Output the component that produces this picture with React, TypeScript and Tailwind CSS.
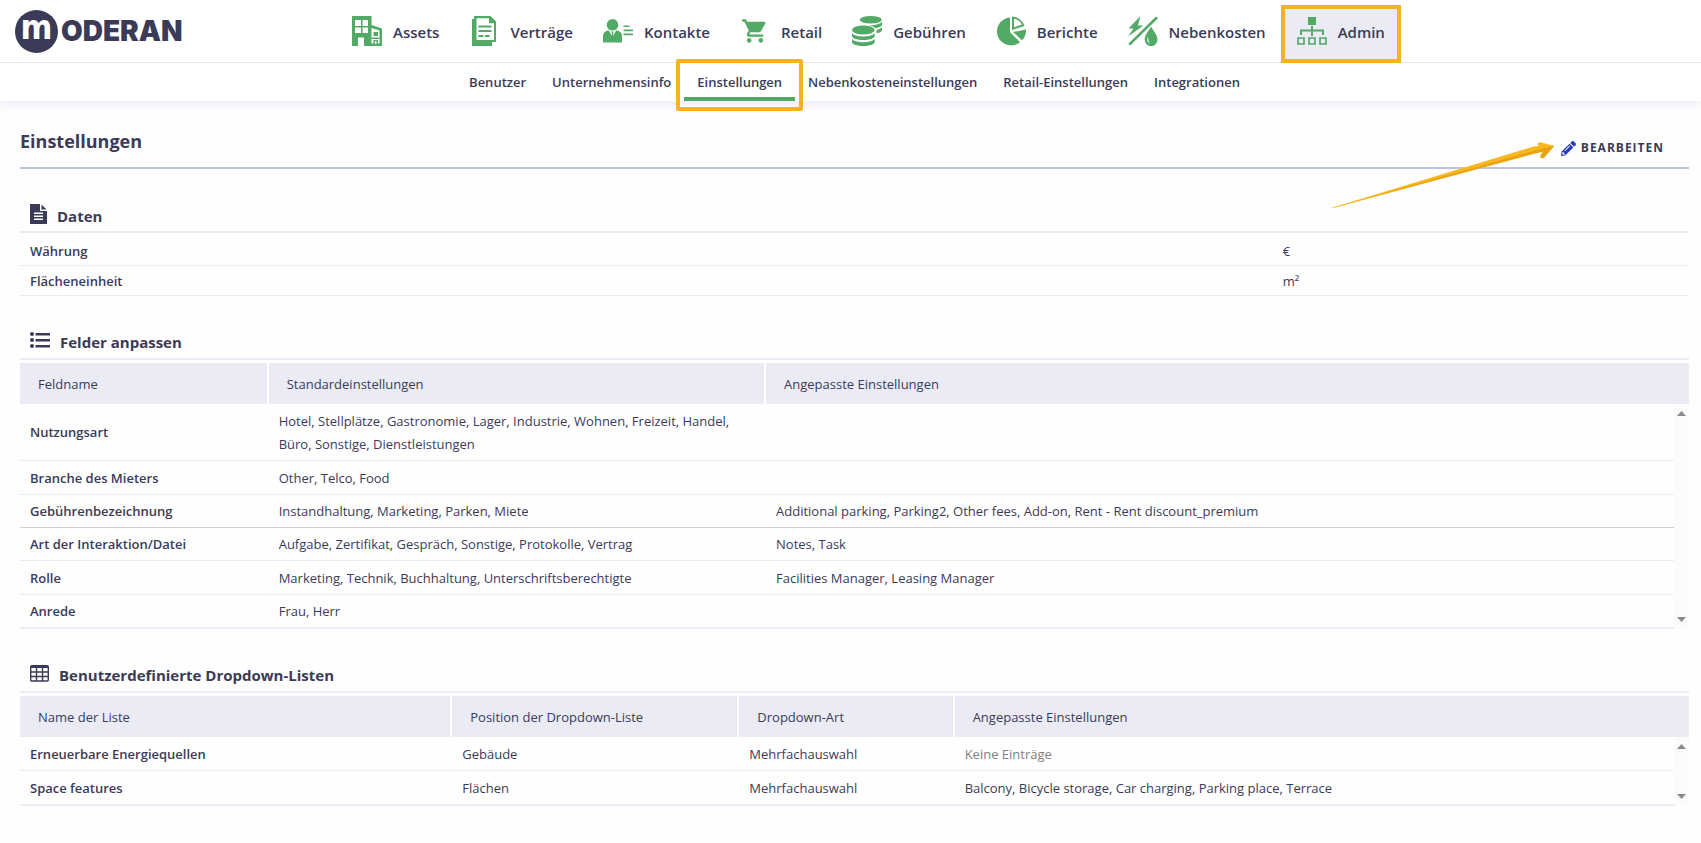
import React from "react";
import { FaPencilAlt } from "react-icons/fa";
import { MdShoppingCart } from "react-icons/md";
import { clsx } from "clsx";

type NavItem = {
    label: string;
    icon: React.ReactNode;
    active?: boolean;
}

type Row = {
    cells: string[];
    height: string;
    strong?: boolean;
    muted?: boolean;
}

type SettingsTableProps = {
    label: string;
    columns: { title: string; width: string }[];
    rows: Row[];
}

const BuildingIcon = () => (
    <svg width="30" height="30" viewBox="0 0 30 30" fill="#53a966">
        <path d="M0 0h19.500v9l10.500 3.500V30H12v-8.500H6V30H0z" />
        <path fill="#fff" d="M3 4h6v6H3zM10.500 4h5.500v6h-5.500zM3 11.500h6v5.500H3zM10.500 11.500h5.500v5.500h-5.500zM19.500 12l8 2.500V28h-8z" />
        <path d="M21.500 16h4.500v4h-4.500zM19.500 21.500h8v1.500h-8zM21.500 24h4.500v6h-4.500zM19 27.500h9V30h-9z" />
        <path fill="#fff" d="M23 25h1.500v3H23z" />
    </svg>
);

const ContractIcon = () => (
    <svg width="24" height="30" viewBox="0 0 24 30" fill="#53a966">
        <path d="M0 3h2V0h16.500L24 5.500V26h-4v4H0z" />
        <path fill="#fff" d="M4.500 2.200h12.500v5h5V24H4.500z" />
        <path d="M6.500 9.500h13v2h-13zM6.500 14h13v2h-13zM6.500 19h5v2h-5zM13 19h4.500v2H13z" />
    </svg>
);

const ContactIcon = () => (
    <svg width="30" height="24" viewBox="0 0 30 24" fill="#53a966">
        <circle cx="9.500" cy="5.800" r="5.800" />
        <path d="M0 23.500V17c0-3 2-5 5-5.500h1l3.500 7 3.500-7h1c3 .5 5 2.500 5 5.500v6.500z" />
        <path d="M8.300 12.500h2.400l-.6 2 .8 4-1.400 2.500-1.400-2.500.8-4z" />
        <path d="M20.500 6.500h6v1.500h-6zM20.500 10.500H30v1.700h-9.500zM20.500 14.500H30v1.700h-9.500z" />
    </svg>
);

const CoinsIcon = () => (
    <svg width="30" height="30" viewBox="0 0 30 30" fill="#53a966">
        <ellipse cx="18.800" cy="3.800" rx="11" ry="3.800" />
        <path d="M17 9.200c5.500.3 11-.8 13-3.700v2.800c0 1.900-2.700 3.400-6.300 3.900-1.500-1.400-3.800-2.500-6.700-3z" />
        <path d="M24.500 14c2.400-.5 4.500-1.500 5.500-2.700V14c0 1.300-2 2.700-5.300 3.500z" />
        <ellipse cx="11.300" cy="14" rx="11.300" ry="4.500" />
        <path d="M0 17.200c2 2.200 6.300 3.200 11.300 3.200s9.300-1 11.400-3.200V20c0 2.400-5.100 4-11.400 4S0 22.400 0 20z" />
        <path d="M0 23c2 2.200 6.300 3.200 11.300 3.200s9.300-1 11.400-3.200v3c0 2.400-5.100 4-11.400 4S0 28.400 0 26z" />
    </svg>
);

const PieIcon = () => (
    <svg width="30" height="30" viewBox="0 0 30 30" fill="#53a966">
        <path d="M14 1.500V16l10 10.200A14 14 0 1 1 14 1.500z" />
        <path d="M17 16l13-2.500c.3 4-1.300 7.800-4 10.800z" />
        <path fillRule="evenodd" d="M16 .5c6.200.2 10.700 4.200 12.500 9.500L16 14zM18 2.800v8.400l7.800-2.500C24.400 5.600 21.600 3.400 18 2.800z" />
    </svg>
);

const UtilitiesIcon = () => (
    <svg width="30" height="30" viewBox="0 0 30 30" fill="#53a966">
        <path d="M12.500 0L.5 12.500h5L0 20.500l15.500-11H9.800z" />
        <path d="M28 .5l2 1.800L2.200 29.500.3 27.700z" />
        <path fillRule="evenodd" d="M23 10.500c2.500 4.500 6.500 8.500 6.500 13a6.300 6.500 0 0 1-12.800 0c0-4.500 4-8.500 6.300-13zM20 20.500c-1.300 2.500-1.200 5.500 1.800 7.200-1.400-2.300-1.800-4.500-1.800-7.200z" />
    </svg>
);

const AdminIcon = () => (
    <svg width="30" height="30" viewBox="0 0 30 30" fill="#53a966">
        <path d="M11 1h8v8h-8zM14 10h2v10h-2zM3 13.500h24V19h-2v-3.500H5V19H3z" />
        <path fill="none" stroke="#53a966" strokeWidth="1.700" d="M1 22h6v6H1zM12 22h6v6h-6zM23 22h6v6h-6z" />
    </svg>
);

const DocumentIcon = () => (
    <svg width="17" height="20" viewBox="0 0 17 20" fill="#3b3b58">
        <path fillRule="evenodd" d="M0 0h10v7h7v13H0zM4 8.500V10h9V8.500zM4 11.500V13h9v-1.500zM4 14.500V16h9v-1.500z" />
        <path d="M11.500.5L16.500 5.500h-5z" />
    </svg>
);

const ListIcon = () => (
    <svg width="20" height="16" viewBox="0 0 20 16" fill="#3b3b58">
        <circle cx="2" cy="2" r="2" />
        <circle cx="2" cy="8" r="2" />
        <circle cx="2" cy="14" r="2" />
        <path d="M5.500 1H20v2.500H5.500zM5.500 7H20v2.500H5.500zM5.500 13H20v2.500H5.500z" />
    </svg>
);

const GridIcon = () => (
    <svg width="19" height="17" viewBox="0 0 19 17" fill="none" stroke="#3b3b58">
        <rect x=".7" y=".7" width="17.600" height="15.300" rx="1" strokeWidth="1.400" />
        <path strokeWidth="2" d="M1 2h17" />
        <path strokeWidth="1.400" d="M1 7h17M1 11.500h17M6.500 2v14M12.500 2v14" />
    </svg>
);

const Logo = () => (
    <a href="#" aria-label="Moderan" className="flex w-[322px] shrink-0 items-center gap-[3px] pl-[15px]">
        <span className="flex size-[43px] items-center justify-center rounded-full bg-[#3b3b58] pb-2 font-['Liberation_Sans_Narrow','DejaVu_Sans_Condensed',sans-serif] text-[34px] leading-[40px] font-bold text-white">m</span>
        <span className="font-['Inter'] text-[28px] leading-9 font-black text-[#3b3b58]">ODERAN</span>
    </a>
);

const navItems: NavItem[] = [
    { label: "Assets", icon: <BuildingIcon /> },
    { label: "Verträge", icon: <ContractIcon /> },
    { label: "Kontakte", icon: <ContactIcon /> },
    { label: "Retail", icon: <MdShoppingCart size={28} color="#53a966" /> },
    { label: "Gebühren", icon: <CoinsIcon /> },
    { label: "Berichte", icon: <PieIcon /> },
    { label: "Nebenkosten", icon: <UtilitiesIcon /> },
    { label: "Admin", icon: <AdminIcon />, active: true },
];

const subItems = [
    "Benutzer",
    "Unternehmensinfo",
    "Einstellungen",
    "Nebenkosteneinstellungen",
    "Retail-Einstellungen",
    "Integrationen",
];

const fieldColumns = [
    { title: "Feldname", width: "w-[14.9%]" },
    { title: "Standardeinstellungen", width: "w-[29.8%]" },
    { title: "Angepasste Einstellungen", width: "" },
];

const fieldRows: Row[] = [
    { cells: ["Nutzungsart", "Hotel, Stellplätze, Gastronomie, Lager, Industrie, Wohnen, Freizeit, Handel, Büro, Sonstige, Dienstleistungen", ""], height: "h-[57px]" },
    { cells: ["Branche des Mieters", "Other, Telco, Food", ""], height: "h-[34px]" },
    { cells: ["Gebührenbezeichnung", "Instandhaltung, Marketing, Parken, Miete", "Additional parking, Parking2, Other fees, Add-on, Rent - Rent discount_premium"], height: "h-[33px]", strong: true },
    { cells: ["Art der Interaktion/Datei", "Aufgabe, Zertifikat, Gespräch, Sonstige, Protokolle, Vertrag", "Notes, Task"], height: "h-[33px]" },
    { cells: ["Rolle", "Marketing, Technik, Buchhaltung, Unterschriftsberechtigte", "Facilities Manager, Leasing Manager"], height: "h-[34px]" },
    { cells: ["Anrede", "Frau, Herr", ""], height: "h-[34px]" },
];

const listColumns = [
    { title: "Name der Liste", width: "w-[25.9%]" },
    { title: "Position der Dropdown-Liste", width: "w-[17.2%]" },
    { title: "Dropdown-Art", width: "w-[12.9%]" },
    { title: "Angepasste Einstellungen", width: "" },
];

const listRows: Row[] = [
    { cells: ["Erneuerbare Energiequellen", "Gebäude", "Mehrfachauswahl", "Keine Einträge"], height: "h-[34px]", muted: true },
    { cells: ["Space features", "Flächen", "Mehrfachauswahl", "Balcony, Bicycle storage, Car charging, Parking place, Terrace"], height: "h-[35px]" },
];

const SectionTitle: React.FC<{ icon: React.ReactNode; children: React.ReactNode }> = ({ icon, children }) => (
    <div className="flex h-[39px] items-center gap-[10px] border-b-2 border-[#e9ebf6] pt-0.5 pl-[10px] text-[#3b3b58]">
        {icon}
        <h2 className="pt-1 text-[15px] leading-5 font-bold">{children}</h2>
    </div>
);

const SettingsTable: React.FC<SettingsTableProps> = ({ label, columns, rows }) => (
    <table aria-label={label} className="mt-[3px] w-full table-fixed border-separate border-spacing-0 text-left">
        <colgroup>
            {columns.map((column) => <col key={column.title} className={column.width} />)}
            <col className="w-[15px]" />
        </colgroup>
        <thead>
            <tr>
                {columns.map((column, i) => {
                    const last = i === columns.length - 1;
                    return (
                        <th
                            key={column.title}
                            colSpan={last ? 2 : 1}
                            className={clsx("h-[41px] bg-[#ebebf5] px-[18px] pt-1 font-normal", !last && "border-r-2 border-white")}
                        >
                            {column.title}
                        </th>
                    );
                })}
            </tr>
        </thead>
        <tbody>
            {rows.map((row, r) => {
                const last = r === rows.length - 1;
                return (
                    <tr key={row.cells[0]} className={row.height}>
                        {row.cells.map((cell, c) => (
                            <td
                                key={c}
                                className={clsx(
                                    "px-[10px] pt-0.5 leading-[23px]",
                                    last ? "border-b-2" : "border-b",
                                    row.strong ? "border-[#c9cee6]" : "border-[#e9ebf6]",
                                    c === 0 && "font-semibold",
                                    row.muted && c === row.cells.length - 1 && "text-[#808080]"
                                )}
                            >
                                {cell}
                            </td>
                        ))}
                        <td className={clsx("bg-[#fbfbfc] px-[3px]", r === 0 && "pt-[7px] align-top", last && "pb-[7px] align-bottom")}>
                            {r === 0 && <svg className="block" width="9" height="5" viewBox="0 0 9 5"><path fill="#8b8b8b" d="M0 5L4.500 0 9 5z" /></svg>}
                            {last && <svg className="block" width="9" height="5" viewBox="0 0 9 5"><path fill="#8b8b8b" d="M0 0h9L4.500 5z" /></svg>}
                        </td>
                    </tr>
                );
            })}
        </tbody>
    </table>
);

export default function App() {
    return (
        <div className="min-h-screen bg-[#fefefe] font-['Open_Sans','Noto_Sans',sans-serif] text-[13px] text-[#3b3b58]">
            <header className="bg-white shadow-[0_2px_10px_#e6e7f7]">
                <div className="flex h-[63px] border-b border-[#e9e9f3]">
                    <Logo />
                    <nav className="flex pl-[15px]">
                        {navItems.map((item) => (
                            <a
                                key={item.label}
                                href="#"
                                className={clsx(
                                    "flex items-center gap-[11px] text-[15px] font-semibold",
                                    item.active ? "mt-[5px] -mb-px border-4 border-[#f6b221] bg-[#ebebf5] px-3 pb-1.5" : "px-[15px]"
                                )}
                            >
                                <span className="flex w-[30px] justify-center">{item.icon}</span>
                                <span className="pt-0.5">{item.label}</span>
                            </a>
                        ))}
                    </nav>
                </div>
                <nav className="flex h-[38px] justify-center pl-2">
                    {subItems.map((item) => {
                        const active = item === "Einstellungen";
                        return (
                            <a
                                key={item}
                                href="#"
                                className={clsx("relative flex items-center px-[13px] font-semibold", active ? "border-b-4 border-[#53a966] pt-1.5" : "pt-0.5")}
                            >
                                {item}
                                {active && <span className="absolute -inset-x-2 -top-1 -bottom-3.5 rounded-xs border-4 border-[#f6b221]" />}
                            </a>
                        );
                    })}
                </nav>
            </header>

            <main className="pr-3 pl-5">
                <div className="relative flex h-[68px] items-center justify-between border-b-2 border-[#bcc4e4] pt-3 pr-[25px]">
                    <h1 className="pt-0.5 text-[18px] font-bold">Einstellungen</h1>
                    <button type="button" className="flex items-center gap-[5px] pt-4 text-[12px] font-bold tracking-[1px]">
                        <FaPencilAlt size={15} color="#2a3eb1" />
                        BEARBEITEN
                    </button>
                    {/* pointer to the edit button */}
                    <svg className="absolute top-[40px] right-[134px]" width="224" height="70" viewBox="0 0 224 70">
                        <path fill="#f9b71f" stroke="#f9b71f" strokeWidth=".5" d="M1 67L202 6l7-1.200c-3-.2-3-3.300 0-3.300L223 5l-10 11.500c-1.800 1.700-4.500 0-3-2.500l2-3.500-10 2.300z" />
                        <path fill="#e8a312" d="M1 67L202 10l13-3.500 8-1.500-10 11.500c-1.800 1.700-4.500 0-3-2.500l2-3.500-10 2.300z" />
                    </svg>
                </div>

                <section className="mt-[25px]">
                    <SectionTitle icon={<DocumentIcon />}>Daten</SectionTitle>
                    <table aria-label="Daten" className="w-full table-fixed text-left">
                        <tbody>
                            <tr className="h-[32px] border-b border-[#e9ebf6]">
                                <th scope="row" className="w-3/4 px-[10px] pt-1.5 font-semibold">Währung</th>
                                <td className="px-[11px] pt-1.5">€</td>
                            </tr>
                            <tr className="h-[30px] border-b border-[#e9ebf6]">
                                <th scope="row" className="px-[10px] pt-1 font-semibold">Flächeneinheit</th>
                                <td className="px-[11px] pt-1">m²</td>
                            </tr>
                        </tbody>
                    </table>
                </section>

                <section className="mt-[25px]">
                    <SectionTitle icon={<ListIcon />}>Felder anpassen</SectionTitle>
                    <SettingsTable label="Felder anpassen" columns={fieldColumns} rows={fieldRows} />
                </section>

                <section className="mt-[25px]">
                    <SectionTitle icon={<GridIcon />}>Benutzerdefinierte Dropdown-Listen</SectionTitle>
                    <SettingsTable label="Benutzerdefinierte Dropdown-Listen" columns={listColumns} rows={listRows} />
                </section>
            </main>
        </div>
    );
}
